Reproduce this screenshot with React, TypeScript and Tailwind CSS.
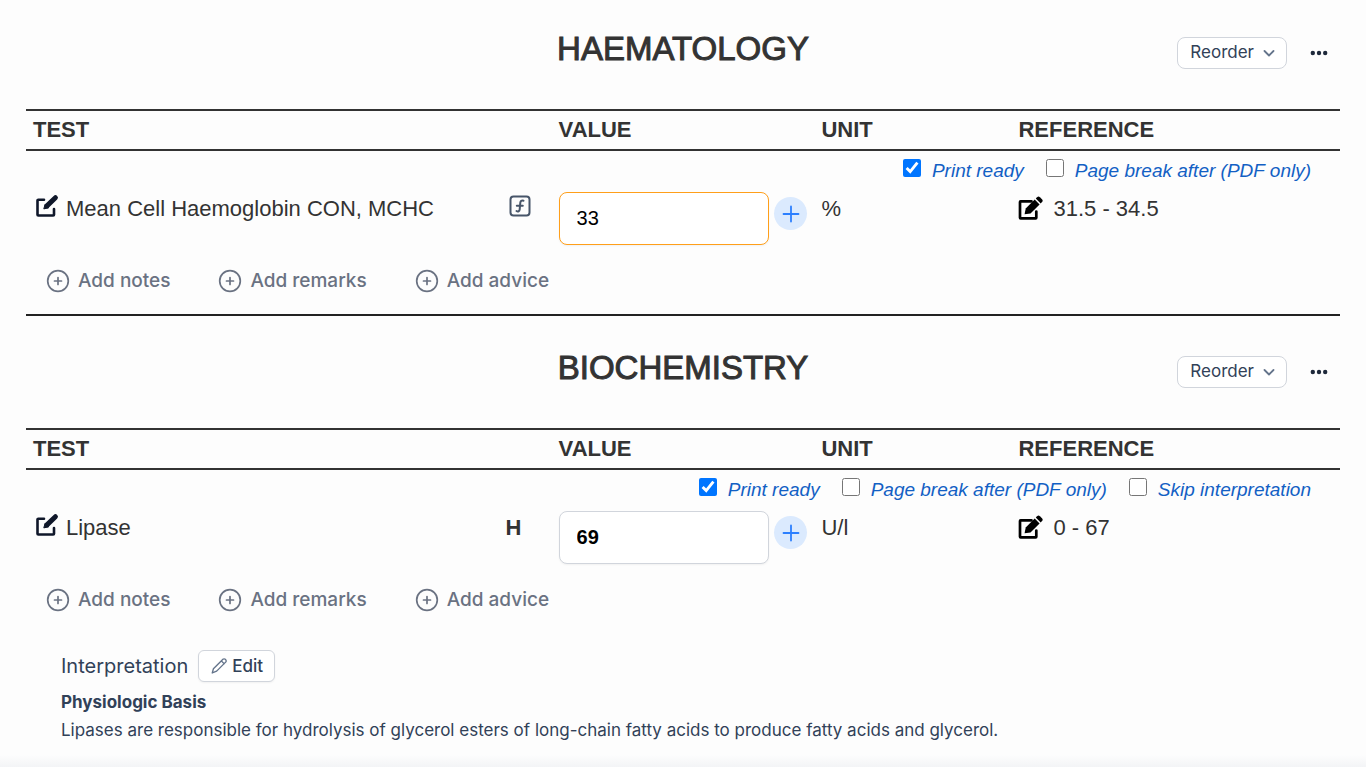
import { useState } from "react";

type Option = {
    id: string;
    label: string;
    checked: boolean;
};

type TestSection = {
    id: string;
    title: string;
    test: string;
    value: string;
    unit: string;
    reference: string;
    flag?: string;
    calculated?: boolean;
    options: Option[];
    interpretation?: { heading: string; body: string };
};

const SECTIONS: TestSection[] = [
    {
        id: "haematology",
        title: "HAEMATOLOGY",
        test: "Mean Cell Haemoglobin CON, MCHC",
        value: "33",
        unit: "%",
        reference: "31.5 - 34.5",
        calculated: true,
        options: [
            { id: "print", label: "Print ready", checked: true },
            { id: "break", label: "Page break after (PDF only)", checked: false },
        ],
    },
    {
        id: "biochemistry",
        title: "BIOCHEMISTRY",
        test: "Lipase",
        value: "69",
        unit: "U/l",
        reference: "0 - 67",
        flag: "H",
        options: [
            { id: "print", label: "Print ready", checked: true },
            { id: "break", label: "Page break after (PDF only)", checked: false },
            { id: "skip", label: "Skip interpretation", checked: false },
        ],
        interpretation: {
            heading: "Physiologic Basis",
            body: "Lipases are responsible for hydrolysis of glycerol esters of long-chain fatty acids to produce fatty acids and glycerol.",
        },
    },
];

const ACTIONS = ["Add notes", "Add remarks", "Add advice"];

function ComposeIcon() {
    return (
        <svg viewBox="0 0 24 24" className="size-6" fill="none" stroke="#0f172a" strokeLinecap="round" strokeLinejoin="round">
            <path d="M9 5.800H3.300a.8.8 0 0 0-.8.8V20.700a.8.8 0 0 0 .8.8H18.200a.8.8 0 0 0 .8-.8V15" strokeWidth="2.600" />
            <path d="M20.400 3.700L12.200 11.600" strokeWidth="5" />
            <path d="M10 10.600L8.800 14.900L13.300 13.900z" fill="#0f172a" strokeWidth="1" />
        </svg>
    );
}

function ReferenceEditIcon() {
    return (
        <svg viewBox="0 0 26 26" className="size-[26px]" fill="none">
            <path d="M13.500 5.300H2.600a.6.6 0 0 0-.6.6V21.700a.6.6 0 0 0 .6.6H17.700a.6.6 0 0 0 .6-.6V15.500" stroke="#000" strokeWidth="2.700" strokeLinecap="round" />
            <path d="M6.600 18.200l1.100-5.700L16.700 3.500l4.900 4.900-9.100 9z" fill="#000" />
            <path d="M17.800 2.500l1.300-1.300a2 2 0 0 1 2.800 0l2.100 2.100a2 2 0 0 1 0 2.800l-1.300 1.300z" fill="#000" />
        </svg>
    );
}

function FormulaIcon() {
    return (
        <svg viewBox="0 0 22 22" className="size-[22px]" fill="none" stroke="#475569" strokeWidth="2" strokeLinecap="round" strokeLinejoin="round">
            <rect x="1.500" y="1.500" width="19" height="19" rx="3" />
            <path d="M14.500 5.800c-2-.6-3 .2-3.200 1.900l-.6 6.600c-.2 2-1.700 2.600-3.200 1.700M7.800 10.700h6" />
        </svg>
    );
}

function PlusCircleIcon() {
    return (
        <svg viewBox="0 0 24 24" className="size-6" fill="none" stroke="currentColor" strokeWidth="1.700" strokeLinecap="round">
            <circle cx="12" cy="12" r="10.300" />
            <path d="M12 8.500v7M8.500 12h7" />
        </svg>
    );
}

function PencilIcon() {
    return (
        <svg viewBox="0 0 20 20" className="size-[18px]" fill="none" stroke="#64748b" strokeWidth="1.500" strokeLinecap="round" strokeLinejoin="round">
            <path d="M13.300 3.600l1-1a1.900 1.900 0 0 1 2.700 0l.4.4a1.900 1.900 0 0 1 0 2.700l-10 10-4.900 2 1.300-4.700zM12.600 4.300l3.100 3.100" />
        </svg>
    );
}

function SectionHeader({ title }: { title: string }) {
    return (
        <header className="grid grid-cols-[1fr_auto_1fr] items-center pb-10">
            <h2 className="col-start-2 text-[33px] leading-10 text-[#333] [-webkit-text-stroke:1px_#333]">{title}</h2>
            <div className="flex items-center justify-end gap-5 pt-2 pr-[9px] font-[Inter,sans-serif] text-slate-700">
                <button type="button" className="flex h-8 items-center gap-2 rounded-lg border border-gray-300 bg-white pr-[10px] pl-3 text-[17px]">
                    Reorder
                    <svg viewBox="0 0 14 14" className="size-[14px]" fill="none" stroke="#64748b" strokeWidth="1.800" strokeLinecap="round" strokeLinejoin="round">
                        <path d="M2.500 5l4.500 4.500L11.500 5" />
                    </svg>
                </button>
                <button type="button" aria-label="More options">
                    <svg viewBox="0 0 24 24" className="size-6" fill="#1e293b">
                        <circle cx="5.800" cy="12" r="2.200" />
                        <circle cx="12" cy="12" r="2.200" />
                        <circle cx="18.200" cy="12" r="2.200" />
                    </svg>
                </button>
            </div>
        </header>
    );
}

function Section({ section }: { section: TestSection }) {
    const [value, setValue] = useState(section.value);
    const [options, setOptions] = useState(section.options);

    const toggleOption = (id: string) => {
        setOptions(options.map((o) => (o.id === id ? { ...o, checked: !o.checked } : o)));
    };

    const rule = section.interpretation ? "" : "border-b-2 border-[#222]";
    const inputStyle = section.flag ? "border-gray-300 font-bold" : "border-[#ff9f1a]";

    return (
        <section className="pt-[29px]">
            <SectionHeader title={section.title} />
            <table className="w-full table-fixed border-separate border-spacing-0 text-left text-[22px] text-[#333]">
                <colgroup>
                    <col className="w-[40%]" />
                    <col className="w-[20%]" />
                    <col className="w-[15%]" />
                    <col className="w-[25%]" />
                </colgroup>
                <thead>
                    <tr className="leading-[38px]">
                        {["TEST", "VALUE", "UNIT", "REFERENCE"].map((name) => (
                            <th key={name} className="border-y-2 border-[#333] px-[7px] py-0 font-bold">{name}</th>
                        ))}
                    </tr>
                </thead>
                <tbody>
                    <tr>
                        <td colSpan={4} className="pt-2 pr-[29px]">
                            <div className="flex justify-end gap-[22px]">
                                {options.map((option) => (
                                    <label key={option.id} className="flex h-6 items-start gap-[11px] text-[19px] leading-6 text-[#1260c4] italic">
                                        <input
                                            type="checkbox"
                                            checked={option.checked}
                                            onChange={() => toggleOption(option.id)}
                                            className="size-[18px] accent-[#0075ff]"
                                        />
                                        {option.label}
                                    </label>
                                ))}
                            </div>
                        </td>
                    </tr>
                    <tr className="align-top">
                        <td className="pt-[9px] pl-[9px]">
                            <div className="flex">
                                <button type="button" aria-label={"Edit " + section.test} className="h-6 pt-[2px]">
                                    <ComposeIcon />
                                </button>
                                <span className="flex-1 pl-[7px] leading-[34px]">{section.test}</span>
                                <span className="w-[46px] leading-[34px] font-bold">
                                    {section.calculated && <span className="block pt-[3px] pl-[3px]"><FormulaIcon /></span>}
                                    {section.flag}
                                </span>
                            </div>
                        </td>
                        <td className="pt-[9px] pl-[7px]">
                            <div className="flex gap-[5px]">
                                <input
                                    type="text"
                                    aria-label={section.test + " value"}
                                    value={value}
                                    onChange={(e) => setValue(e.target.value)}
                                    className={"h-[53px] w-4/5 min-w-0 flex-1 rounded-lg border bg-white px-[17px] text-xl text-black shadow-xs " + inputStyle}
                                />
                                <button type="button" aria-label="Add value" className="mt-[5px] mr-[7px] flex size-[33px] items-center justify-center rounded-full bg-blue-100 text-blue-500">
                                    <svg viewBox="0 0 18 18" className="size-[18px]" fill="none" stroke="currentColor" strokeWidth="1.800" strokeLinecap="round">
                                        <path d="M9 1.500v15M1.500 9h15" />
                                    </svg>
                                </button>
                            </div>
                        </td>
                        <td className="pt-[9px] pl-[7px] leading-[34px]">{section.unit}</td>
                        <td className="pt-[9px] pl-[7px]">
                            <div className="flex items-center gap-[9px] leading-[34px]">
                                <button type="button" aria-label="Edit reference">
                                    <ReferenceEditIcon />
                                </button>
                                {section.reference}
                            </div>
                        </td>
                    </tr>
                    <tr>
                        <td colSpan={4} className={"pt-6 pb-[21px] pl-5 " + rule}>
                            <div className="flex gap-12 font-[Inter,sans-serif] text-[19px] leading-6 font-medium text-gray-500">
                                {ACTIONS.map((action) => (
                                    <button key={action} type="button" className="flex items-center gap-2">
                                        <PlusCircleIcon />
                                        {action}
                                    </button>
                                ))}
                            </div>
                        </td>
                    </tr>
                </tbody>
            </table>
            {section.interpretation && (
                <div className="pt-[17px] pl-[35px] font-[Inter,sans-serif] text-[17px] leading-7 text-slate-700">
                    <div className="flex items-center gap-[10px]">
                        <h3 className="text-xl">Interpretation</h3>
                        <button type="button" className="flex h-8 items-center gap-1 rounded-md border border-gray-300 bg-white px-[11px] font-medium shadow-xs">
                            <PencilIcon />
                            Edit
                        </button>
                    </div>
                    <p className="pt-[6px] font-bold">{section.interpretation.heading}</p>
                    <p>{section.interpretation.body}</p>
                </div>
            )}
        </section>
    );
}

function App() {
    return (
        <div className="flex min-h-screen flex-col justify-between bg-[#fdfdfd] font-['Liberation_Sans',Arial,sans-serif]">
            <main className="flex flex-col gap-[3px] px-[26px]">
                {SECTIONS.map((section) => (
                    <Section key={section.id} section={section} />
                ))}
            </main>
            <div className="h-3 bg-linear-to-b from-transparent to-gray-100" />
        </div>
    );
}

export default App;
